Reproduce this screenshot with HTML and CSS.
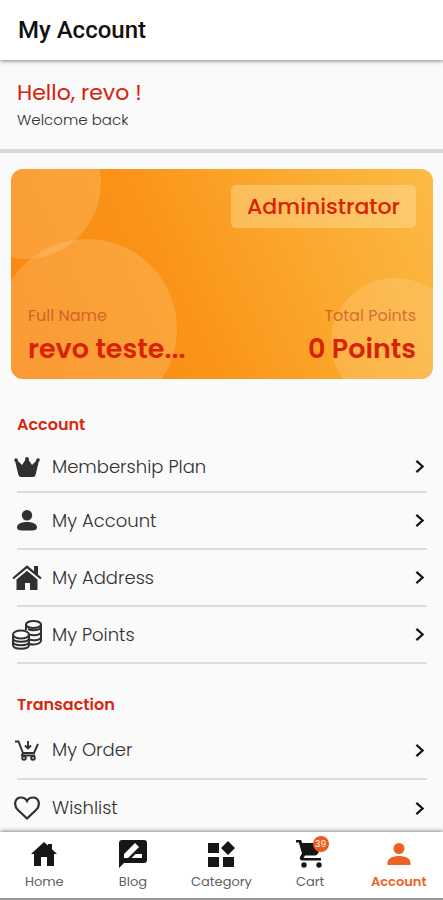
FILE: index.html
```html
<!DOCTYPE html>
<html lang="en">
<head>
<meta charset="utf-8">
<meta name="viewport" content="width=device-width, initial-scale=1">
<title>My Account</title>
<link rel="stylesheet" href="styles.css">
</head>
<body>
<svg class="defs" aria-hidden="true">
  <symbol id="chevron" viewBox="0 0 24 24"><path d="M7 3l10 9-10 9" fill="none" stroke="currentColor" stroke-width="3.600"/></symbol>
  <symbol id="person" viewBox="0 0 24 24"><circle cx="12" cy="6.500" r="5.500"/><path d="M.5 23v-2.500c0-4.500 6.500-6.500 11.500-6.500s11.500 2 11.500 6.500V23z"/></symbol>
</svg>
<div class="app">
  <header class="topbar"><h1>My Account</h1></header>
  <main class="content">
    <section class="greeting">
      <h2>Hello, revo !</h2>
      <p>Welcome back</p>
    </section>
    <section class="card">
      <svg class="card-art" viewBox="0 0 422 210" preserveAspectRatio="xMidYMid slice" aria-hidden="true">
        <circle cx="14" cy="14" r="76"/>
        <circle cx="76" cy="160" r="90"/>
        <circle cx="384" cy="173" r="64"/>
      </svg>
      <span class="role">Administrator</span>
      <div class="card-info">
        <div><p class="label">Full Name</p><p class="value">revo teste...</p></div>
        <div class="points"><p class="label">Total Points</p><p class="value">0 Points</p></div>
      </div>
    </section>
    <section class="group group-account">
      <h3>Account</h3>
      <ul>
        <li><a href="#membership">
          <span class="icon"><svg width="26" height="20" viewBox="0 0 26 20"><path d="M1 3.500L2.500 2.500 8 8l4-6h2l4 6 5.500-5.500L25 3.500 21.800 17q-.5 3-3 3H7.200q-2.500 0-3-3z"/><circle cx="2" cy="3" r="1.800"/><circle cx="13" cy="2" r="1.900"/><circle cx="24" cy="3" r="1.800"/></svg></span>
          <span class="text">Membership Plan</span><svg class="arrow"><use href="#chevron"/></svg></a></li>
        <li><a href="#account">
          <span class="icon"><svg width="20" height="21" viewBox="0 0 20 21"><circle cx="10" cy="5.300" r="5.200"/><path d="M0 17.500C0 13.500 5 12 10 12s10 1.500 10 5.500q0 3-5 3H5q-5 0-5-3z"/></svg></span>
          <span class="text">My Account</span><svg class="arrow"><use href="#chevron"/></svg></a></li>
        <li><a href="#address">
          <span class="icon"><svg width="30" height="25" viewBox="0 0 30 25"><path d="M1 13.500L15 1.800 29 13.500" fill="none" stroke="currentColor" stroke-width="2.200"/><path d="M22 1h4v9l-4-3.300zM15 5.800l10.500 8.700V25H18v-7h-5v7H4.500V14.500z"/></svg></span>
          <span class="text">My Address</span><svg class="arrow"><use href="#chevron"/></svg></a></li>
        <li><a href="#points">
          <span class="icon"><svg width="30" height="30" viewBox="0 0 30 30"><g fill="none" stroke="currentColor" stroke-width="2"><ellipse cx="21.500" cy="4.500" rx="7.500" ry="3.500"/><path d="M14 4.500V10M29 4.500v16c0 2-3 4-7.500 4-2 0-3 0-4.500-.5M16 9c4 2 13 1.500 13-2M17 14.500c5 1.500 12 .5 12-2.500M17 19.500c5 1.500 12 .5 12-2.500"/><ellipse cx="9" cy="14.500" rx="8" ry="4"/><path d="M1 14.500V25c0 5 16 5 16 0V14.500M1 18c0 5 16 5 16 0M1 21.500c0 5 16 5 16 0"/></g></svg></span>
          <span class="text">My Points</span><svg class="arrow"><use href="#chevron"/></svg></a></li>
      </ul>
    </section>
    <section class="group">
      <h3>Transaction</h3>
      <ul>
        <li><a href="#order">
          <span class="icon"><svg width="24" height="21" viewBox="0 0 24 21"><g fill="none" stroke="currentColor" stroke-width="1.900"><path d="M0 1.500h3.500L8 13h11l4-9M8 13l-1.500 3M7 15.500h13M13 1v7M10 5.500l3 3 3-3"/><circle cx="9" cy="18" r="1.800"/><circle cx="18" cy="18" r="1.800"/></g></svg></span>
          <span class="text">My Order</span><svg class="arrow"><use href="#chevron"/></svg></a></li>
        <li><a href="#wishlist">
          <span class="icon"><svg width="26" height="24" viewBox="0 0 26 24"><path d="M13 22.500L4 14C-1 9 1 1.500 7 1.500c3 0 5 1.500 6 3.500 1-2 3-3.500 6-3.500 6 0 8 7.500 3 12.500z" fill="none" stroke="currentColor" stroke-width="2.200"/></svg></span>
          <span class="text">Wishlist</span><svg class="arrow"><use href="#chevron"/></svg></a></li>
      </ul>
    </section>
  </main>
  <nav class="tabs">
    <a href="#home"><span class="tab-icon"><svg width="26" height="24" viewBox="0 0 26 24"><path d="M13 0l4 3.600V2h4v5.200L26 12h-3v12h-7v-9h-6v9H3V12H0z"/></svg></span>Home</a>
    <a href="#blog"><span class="tab-icon"><svg width="28" height="28" viewBox="0 0 28 28"><path fill-rule="evenodd" d="M3 0h22q3 0 3 3v17q0 3-3 3H5l-5 5V3q0-3 3-3zM5 18h4L20 7l-4-4L5 14zM12.500 18H23v-4h-6.500z"/></svg></span>Blog</a>
    <a href="#category"><span class="tab-icon"><svg width="27" height="27" viewBox="0 0 27 27"><path d="M0 2h11v10H0zM0 16h11v10H0zM15 16h11v10H15zM20 0l7 7-7 7-7-7z"/></svg></span>Category</a>
    <a href="#cart"><span class="tab-icon"><svg width="29" height="28" viewBox="0 0 29 28"><path d="M0 0h5l1.300 3H27l-5 10.500q-1 2-3 2H9L7.500 18H25v2.500H7q-4 0-3-3.500L6 13.500 2.800 2.500H0z"/><circle cx="8" cy="25" r="2.700"/><circle cx="23" cy="25" r="2.700"/></svg><span class="badge">39</span></span>Cart</a>
    <a href="#me" class="active" aria-current="page"><span class="tab-icon"><svg width="24" height="24"><use href="#person"/></svg></span>Account</a>
  </nav>
</div>
</body>
</html>
```
FILE: styles.css
```css
* { box-sizing: border-box; }
body, h1, h2, h3, p, ul { margin: 0; padding: 0; }
body {
  font-family: Poppins, Inter, "Liberation Sans", sans-serif;
  background: #fafafa;
  color: #303030;
}
a { color: inherit; text-decoration: none; }
svg { fill: currentColor; display: block; }
.defs { position: absolute; width: 0; height: 0; }
.app { display: flex; flex-direction: column; height: 100vh; }

.topbar {
  position: relative;
  flex: none;
  padding: 16px 18px;
  background: #fff;
  box-shadow: 0 1px 4px rgba(0, 0, 0, .5);
}
.topbar h1 {
  font: 500 24px/28px Roboto, Inter, sans-serif;
  color: #111;
}
.content { flex: 1; min-height: 0; overflow: hidden; }

.greeting {
  padding: 20px 17px 16px;
  border-bottom: 4px solid #d9d9d9;
}
.greeting h2 { font-size: 22px; line-height: 26px; font-weight: 400; color: #d8200a; }
.greeting p { font-size: 15px; line-height: 27px; font-weight: 300; }

.card {
  position: relative;
  display: flex;
  flex-direction: column;
  justify-content: space-between;
  min-height: 210px;
  margin: 16px 10px 0 11px;
  padding: 16px 17px 12px;
  border-radius: 12px;
  overflow: hidden;
  background: linear-gradient(65deg, #f98512 0%, #fa9317 38%, #fba62b 65%, #fbbb46 100%);
  color: #d92205;
}
.card-art { position: absolute; inset: 0; width: 100%; height: 100%; fill: rgba(255, 225, 175, .23); }
.role {
  position: relative;
  align-self: flex-end;
  padding: 0 16px;
  border-radius: 5px;
  background: rgba(255, 230, 170, .4);
  font-size: 22px;
  line-height: 43px;
  font-weight: 500;
}
.card-info { position: relative; display: flex; justify-content: space-between; }
.points { text-align: right; }
.label { font-size: 16px; line-height: 24px; color: #b8301c; opacity: .55; }
.value { font-size: 27px; line-height: 36px; margin-top: 3px; font-weight: 600; }

.group { padding: 29px 16px 0 17px; }
.group-account { padding-top: 34px; }
.group h3 { font-size: 16px; line-height: 24px; font-weight: 600; color: #d8260e; }
.group ul { list-style: none; margin-top: 5px; }
.group li { border-bottom: 2px solid #dcdcdc; }
.group a { display: flex; align-items: center; height: 56px; }
.group-account li:first-child a { height: 49px; }
.group-account li + li a { height: 55px; }
.icon { display: flex; justify-content: center; flex: none; width: 30px; margin-left: -5px; }
.text { flex: 1; margin-left: 10px; font-size: 18px; line-height: 24px; font-weight: 300; }
.arrow { width: 15px; height: 15px; color: #151515; }

.tabs {
  position: relative;
  flex: none;
  display: grid;
  grid-template-columns: repeat(5, 1fr);
  padding: 4px 0 6px;
  border-bottom: 2px solid #999;
  background: #fff;
  box-shadow: 0 -1px 4px rgba(0, 0, 0, .45);
  color: #161616;
}
.tabs a {
  display: flex;
  flex-direction: column;
  align-items: center;
  font-size: 13px;
  line-height: 20px;
  color: #606060;
}
.tab-icon { position: relative; display: flex; align-items: center; height: 36px; color: #161616; }
.tabs .active, .active .tab-icon { color: #ee6122; }
.tabs .active { font-weight: 600; }
.badge {
  position: absolute;
  top: 0;
  right: -4px;
  width: 16px;
  height: 16px;
  border-radius: 50%;
  background: #ee5b1d;
  color: #fff;
  font-size: 9px;
  line-height: 16px;
  text-align: center;
}
```
